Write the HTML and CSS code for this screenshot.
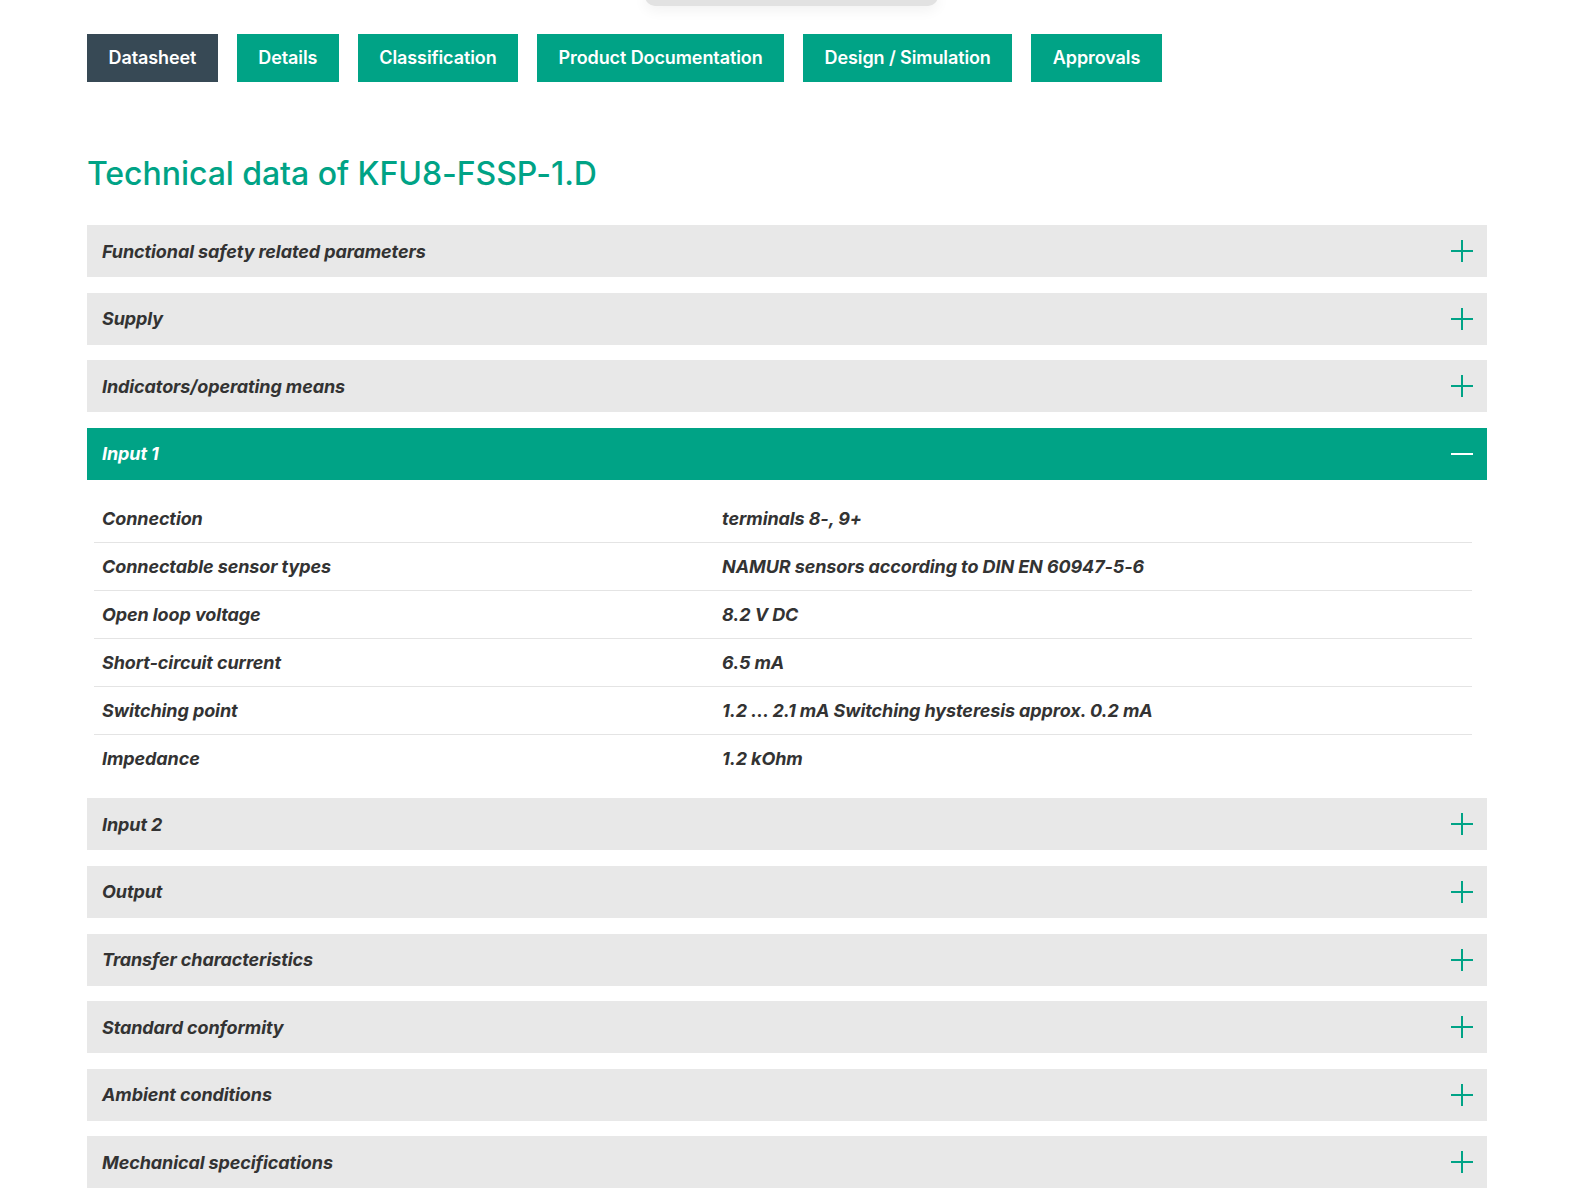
FILE: index.html
```html
<!DOCTYPE html>
<html lang="en">
<head>
<meta charset="utf-8">
<title>Technical data of KFU8-FSSP-1.D</title>
<link rel="stylesheet" href="styles.css">
</head>
<body>
<div class="top-pill"></div>
<main class="page">
  <nav class="tabs">
    <a class="tab active">Datasheet</a>
    <a class="tab">Details</a>
    <a class="tab">Classification</a>
    <a class="tab">Product Documentation</a>
    <a class="tab">Design / Simulation</a>
    <a class="tab">Approvals</a>
  </nav>

  <h1 class="title">Technical data of KFU8-FSSP-1.D</h1>

  <section class="acc">
    <div class="acc-head"><span>Functional safety related parameters</span><i class="ico plus"></i></div>
  </section>
  <section class="acc">
    <div class="acc-head"><span>Supply</span><i class="ico plus"></i></div>
  </section>
  <section class="acc">
    <div class="acc-head"><span>Indicators/operating means</span><i class="ico plus"></i></div>
  </section>
  <section class="acc open">
    <div class="acc-head"><span>Input 1</span><i class="ico minus"></i></div>
    <div class="acc-body">
      <div class="row"><div class="k">Connection</div><div class="v">terminals 8-, 9+</div></div>
      <div class="row"><div class="k">Connectable sensor types</div><div class="v">NAMUR sensors according to DIN EN 60947-5-6</div></div>
      <div class="row"><div class="k">Open loop voltage</div><div class="v">8.2 V DC</div></div>
      <div class="row"><div class="k">Short-circuit current</div><div class="v">6.5 mA</div></div>
      <div class="row"><div class="k">Switching point</div><div class="v">1.2 ... 2.1 mA Switching hysteresis approx. 0.2 mA</div></div>
      <div class="row"><div class="k">Impedance</div><div class="v">1.2 kOhm</div></div>
    </div>
  </section>
  <section class="acc">
    <div class="acc-head"><span>Input 2</span><i class="ico plus"></i></div>
  </section>
  <section class="acc">
    <div class="acc-head"><span>Output</span><i class="ico plus"></i></div>
  </section>
  <section class="acc">
    <div class="acc-head"><span>Transfer characteristics</span><i class="ico plus"></i></div>
  </section>
  <section class="acc">
    <div class="acc-head"><span>Standard conformity</span><i class="ico plus"></i></div>
  </section>
  <section class="acc">
    <div class="acc-head"><span>Ambient conditions</span><i class="ico plus"></i></div>
  </section>
  <section class="acc">
    <div class="acc-head"><span>Mechanical specifications</span><i class="ico plus"></i></div>
  </section>
</main>
</body>
</html>
```

FILE: styles.css
```css
* { box-sizing: border-box; }
html, body { margin: 0; padding: 0; background: #fff; }
body {
  font-family: Inter, "Noto Sans", "Liberation Sans", sans-serif;
  color: #333;
  position: relative;
}
.top-pill {
  position: absolute;
  left: 645px;
  top: -10px;
  width: 293px;
  height: 16px;
  background: #e2e2e2;
  border-radius: 0 0 10px 10px;
  box-shadow: 0 4px 14px rgba(0,0,0,0.06);
}
.page {
  width: 1400px;
  margin-left: 87px;
  padding-top: 34px;
}
.tabs {
  display: flex;
  gap: 19px;
}
.tab {
  display: block;
  height: 48px;
  line-height: 48px;
  padding: 0 21.5px;
  background: #00a386;
  color: #fff;
  font-size: 18px;
  font-weight: 600;
  letter-spacing: -0.1px;
}
.tab.active { background: #374955; }
.title {
  margin: 72px 0 31px;
  font-size: 32px;
  line-height: 40px;
  font-weight: 500;
  color: #00a386;
  letter-spacing: -0.05px;
}
.acc { margin-bottom: 15.6px; }
.acc-head {
  height: 52px;
  display: flex;
  align-items: center;
  justify-content: space-between;
  padding: 0 14px 0 15px;
  background: #e8e8e8;
  font-size: 18px;
  font-weight: 700;
  font-style: italic;
  color: #333;
  letter-spacing: -0.1px;
}
.acc.open .acc-head { background: #00a386; color: #fff; }
.ico {
  position: relative;
  width: 22px;
  height: 22px;
  display: block;
}
.ico::before, .ico::after {
  content: "";
  position: absolute;
  background: #00a386;
}
.ico::before { left: 0; right: 0; top: 10px; height: 2px; }
.plus::after { top: 0; bottom: 0; left: 10px; width: 2px; }
.minus::after { display: none; }
.minus::before { background: #fff; }
.acc-body {
  padding: 15px 15px 0 7px;
}
.row {
  display: flex;
  height: 48px;
  align-items: center;
  border-bottom: 1px solid #e4e4e4;
  font-size: 18px;
  font-style: italic;
  font-weight: 700;
  letter-spacing: -0.1px;
  color: #333;
}
.row:last-child { border-bottom: none; }
.k { width: 45%; padding-left: 8px; }
.v { flex: 1; padding-left: 8px; }
```
